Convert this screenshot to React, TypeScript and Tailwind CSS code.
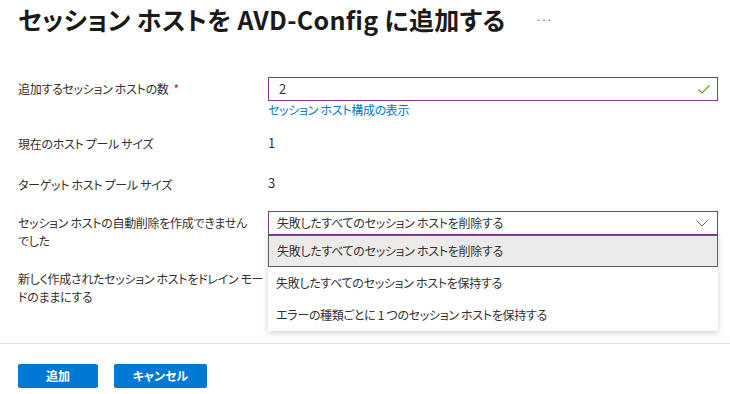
import React from 'react';

const font = "font-['Noto_Sans_CJK_JP','Noto_Sans',sans-serif] [font-feature-settings:'palt']";

const options = [
  '失敗したすべてのセッション ホストを削除する',
  '失敗したすべてのセッション ホストを保持する',
  'エラーの種類ごとに 1 つのセッション ホストを保持する',
];

function Check() {
  return (
    <svg width="14" height="14" viewBox="0 0 14 14" fill="none">
      <path d="M1.5 7.5 L5 11 L12.5 3.5" stroke="#57a300" strokeWidth="1.1" />
    </svg>
  );
}

function Chevron() {
  return (
    <svg width="14" height="14" viewBox="0 0 14 14" fill="none">
      <path d="M1.5 4.5 L7 10 L12.5 4.5" stroke="#605e5c" strokeWidth="1" />
    </svg>
  );
}

export default function App() {
  return (
    <div className={`relative w-[730px] h-[394px] overflow-hidden bg-white text-[#323130] ${font}`}>
      {/* タイトル */}
      <div className="flex items-center h-[38px] pl-[18px]">
        <h1 className="text-[25px] font-bold leading-[32px] tracking-[0.3px] text-[#1b1a19] whitespace-nowrap">セッション ホストを AVD-Config に追加する</h1>
        <span className="ml-[30px] text-[10px] text-[#605e5c]">···</span>
      </div>

      {/* フォーム */}
      <div className="flex flex-col pl-[18px] pr-[12px] mt-[39px] text-[12px] tracking-[-0.3px]">
        <div className="flex">
          <div className="w-[250px] pt-[2px] leading-[20px] whitespace-nowrap">
            追加するセッション ホストの数<span className="ml-[5px] text-[#a4262c]">*</span>
          </div>
          <div className="flex-1 flex flex-col">
            <div className="flex items-center h-[24px] border border-[#7a3a8e] pl-[10px] pr-[6px]">
              <span className="flex-1 text-[13px]">2</span>
              <Check />
            </div>
            <a className="leading-[18px] text-[#0078d4]">セッション ホスト構成の表示</a>
          </div>
        </div>

        <div className="flex mt-[14px] leading-[20px]">
          <div className="w-[250px] pt-[1px] whitespace-nowrap">現在のホスト プール サイズ</div>
          <div className="flex-1 text-[13px]">1</div>
        </div>

        <div className="flex mt-[19px] leading-[20px]">
          <div className="w-[250px] pt-[2px] whitespace-nowrap">ターゲット ホスト プール サイズ</div>
          <div className="flex-1 text-[13px]">3</div>
        </div>

        <div className="flex mt-[16px]">
          <div className="w-[250px] leading-[18px] pt-[3px] whitespace-nowrap">
            セッション ホストの自動削除を作成できません<br />でした
          </div>
          <div className="flex-1">
            <div className="flex items-center h-[24px] border border-[#7a3a8e] pl-[8px] pr-[8px]">
              <span className="flex-1">{options[0]}</span>
              <Chevron />
            </div>
          </div>
        </div>

        <div className="flex mt-[20px]">
          <div className="w-[250px] leading-[18px] whitespace-nowrap">
            新しく作成されたセッション ホストをドレイン モー<br />ドのままにする
          </div>
        </div>
      </div>

      {/* ドロップダウン メニュー */}
      <div className="absolute left-[268px] top-[235px] w-[450px] bg-white text-[12px] tracking-[-0.3px] shadow-[0_2px_6px_rgba(0,0,0,0.18)]">
        <div className="h-[32px] flex items-center pl-[8px] bg-[#edebe9] border border-[#605e5c]">{options[0]}</div>
        <div className="h-[32px] flex items-center pl-[8px]">{options[1]}</div>
        <div className="h-[32px] flex items-center pl-[8px]">{options[2]}</div>
      </div>

      {/* フッター */}
      <div className="absolute left-0 right-0 top-[343px] border-t border-[#e1dfdd]">
        <div className="flex gap-[16px] pl-[18px] pt-[20px]">
          <button className="w-[80px] h-[24px] rounded-[2px] bg-[#0078d4] text-white text-[12px] font-bold">追加</button>
          <button className="w-[93px] h-[24px] rounded-[2px] bg-[#0078d4] text-white text-[12px] font-bold">キャンセル</button>
        </div>
      </div>
    </div>
  );
}
